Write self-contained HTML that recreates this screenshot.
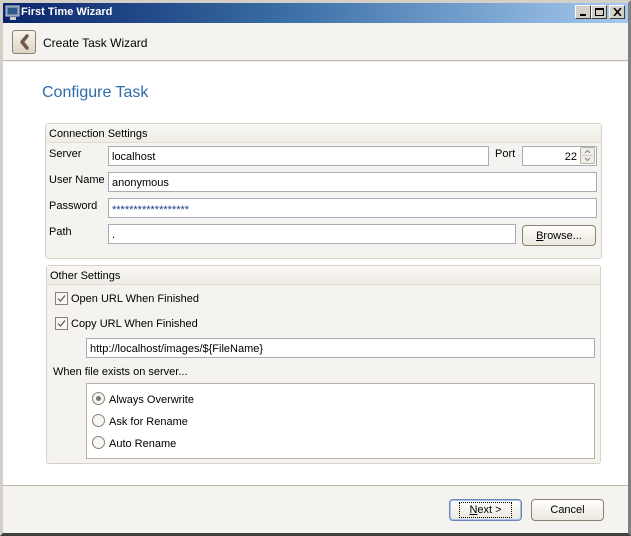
<!DOCTYPE html>
<html><head><meta charset="utf-8"><style>
*{box-sizing:border-box;margin:0;padding:0}
body{width:631px;height:536px;position:relative;overflow:hidden;background:#f5f3ef;font-family:"Liberation Sans",Arial,sans-serif;font-size:11px;color:#000}
.a{position:absolute}
.inp{position:absolute;background:#fff;border:1px solid #a5acb5;height:20px;padding:4px 3px 0;font-size:11px;line-height:13px;white-space:nowrap;overflow:hidden}
.lbl{position:absolute;font-size:11px;margin-top:1px}
.grp{position:absolute;border:1px solid #d8d2c6;border-radius:3px;background:#f5f3ef}
.gh{position:absolute;left:0;right:0;top:0;height:19px;border-bottom:1px solid #e2ddd3;background:linear-gradient(#f8f7f3,#efece5);padding:4px 3px 0;font-size:11px}
.btn{position:absolute;border:1px solid #8a8172;border-radius:4px;background:linear-gradient(#fffffd,#ece8dd);text-align:center;font-size:11px;line-height:21px}
.cb{position:absolute;width:13px;height:13px;border:1px solid #8a8172;background:#f7f6f2}
.rb{position:absolute;width:13px;height:13px;border:1px solid #8a8172;border-radius:50%;background:#f7f6f2}
</style></head><body>
<div class="a" style="left:0;top:0;width:631px;height:536px;border:3px solid #d4d0c8;border-bottom-color:#404040;border-right-color:#808080"></div>
<div class="a" style="left:3px;top:3px;width:625px;height:20px;background:linear-gradient(90deg,#0a246a 0%,#3a6ea5 45%,#a6caf0 100%)"></div>
<svg class="a" style="left:5px;top:5px" width="16" height="16"><rect x="1" y="1" width="13" height="10" fill="#6a8ab0" stroke="#ccc"/><rect x="3" y="3" width="9" height="6" fill="#2d5a8a"/><rect x="5" y="12" width="6" height="3" fill="#ccc"/></svg>
<div class="a" style="left:21px;top:6px;color:#fff;font-weight:bold;font-size:11px">First Time Wizard</div>
<div class="a" style="left:575px;top:5px;width:16px;height:14px;background:#d4d0c8;border:1px solid;border-color:#fff #404040 #404040 #fff"><div class="a" style="left:4px;top:8px;width:6px;height:2px;background:#000"></div></div>
<div class="a" style="left:591px;top:5px;width:16px;height:14px;background:#d4d0c8;border:1px solid;border-color:#fff #404040 #404040 #fff"><div class="a" style="left:3px;top:2px;width:9px;height:8px;border:1px solid #000;border-top-width:2px"></div></div>
<div class="a" style="left:609px;top:5px;width:16px;height:14px;background:#d4d0c8;border:1px solid;border-color:#fff #404040 #404040 #fff"><svg class="a" style="left:3px;top:2px" width="9" height="8"><path d="M1 0 L8 8 M8 0 L1 8" stroke="#000" stroke-width="1.6"/></svg></div>
<div class="a" style="left:3px;top:23px;width:625px;height:38px;background:#f5f3ef;border-bottom:1px solid #bfb8ad"></div>
<div class="a" style="left:12px;top:30px;width:24px;height:24px;border:1px solid #8a8172;border-radius:3px;background:linear-gradient(#f7f3ec,#ddd4c6)"></div>
<svg class="a" style="left:12px;top:30px" width="24" height="24"><path d="M15 6 L10 12 L15 18" stroke="#6b5a4a" stroke-width="3.5" fill="none" stroke-linecap="round" stroke-linejoin="round"/></svg>
<div class="a" style="left:43px;top:36px;font-size:12px">Create Task Wizard</div>
<div class="a" style="left:3px;top:62px;width:625px;height:424px;background:#fff;border-bottom:1px solid #bfb8ad"></div>
<div class="a" style="left:42px;top:84px;font-size:16px;color:#2e6ba8">Configure Task</div>

<div class="grp" style="left:45px;top:123px;width:557px;height:136px"><div class="gh">Connection Settings</div></div>
<div class="lbl" style="left:49px;top:147px">Server</div>
<div class="inp" style="left:108px;top:146px;width:381px">localhost</div>
<div class="lbl" style="left:495px;top:147px">Port</div>
<div class="inp" style="left:522px;top:146px;width:75px;text-align:right;padding-right:19px">22</div>
<div class="a" style="left:580px;top:147px;width:15px;height:17px;border:1px solid #b8b2a6;border-radius:2px;background:#f0ede6"></div>
<svg class="a" style="left:580px;top:147px" width="15" height="17"><path d="M5 6 L7.5 3.5 L10 6 M5 11 L7.5 13.5 L10 11" stroke="#888" fill="none"/><path d="M2 8.5 H13" stroke="#ccc"/></svg>
<div class="lbl" style="left:49px;top:173px">User Name</div>
<div class="inp" style="left:108px;top:172px;width:489px">anonymous</div>
<div class="lbl" style="left:49px;top:199px">Password</div>
<div class="inp" style="left:108px;top:198px;width:489px;color:#1a3a8a;font-size:11px;padding-top:5px">******************</div>
<div class="lbl" style="left:49px;top:225px">Path</div>
<div class="inp" style="left:108px;top:224px;width:408px">.</div>
<div class="btn" style="left:522px;top:225px;width:74px;height:21px;line-height:20px"><u>B</u>rowse...</div>

<div class="grp" style="left:46px;top:265px;width:555px;height:199px"><div class="gh">Other Settings</div></div>
<div class="cb" style="left:55px;top:292px"></div><svg class="a" style="left:55px;top:292px" width="13" height="13"><path d="M3 6.5 L5.5 9 L10 3.5" stroke="#555" stroke-width="1.2" fill="none"/></svg>
<div class="lbl" style="left:71px;top:292px">Open URL When Finished</div>
<div class="cb" style="left:55px;top:317px"></div><svg class="a" style="left:55px;top:317px" width="13" height="13"><path d="M3 6.5 L5.5 9 L10 3.5" stroke="#555" stroke-width="1.2" fill="none"/></svg>
<div class="lbl" style="left:71px;top:317px">Copy URL When Finished</div>
<div class="inp" style="left:86px;top:338px;width:509px">http://localhost/images/${FileName}</div>
<div class="lbl" style="left:53px;top:365px">When file exists on server...</div>
<div class="a" style="left:86px;top:383px;width:509px;height:76px;border:1px solid #b8b2a6;background:#fff"></div>
<div class="rb" style="left:92px;top:392px"><div class="a" style="left:3px;top:3px;width:5px;height:5px;border-radius:50%;background:#777"></div></div>
<div class="lbl" style="left:109px;top:393px">Always Overwrite</div>
<div class="rb" style="left:92px;top:414px"></div>
<div class="lbl" style="left:109px;top:415px">Ask for Rename</div>
<div class="rb" style="left:92px;top:436px"></div>
<div class="lbl" style="left:109px;top:437px">Auto Rename</div>

<div class="btn" style="left:449px;top:499px;width:73px;height:22px;border-color:#6b84b8;box-shadow:inset 0 0 0 1px #a8c4ec;line-height:16px"><span style="border:1px dotted #000;padding:0 9px;display:inline-block;line-height:14px;margin-top:2px"><u>N</u>ext &gt;</span></div>
<div class="btn" style="left:531px;top:499px;width:73px;height:22px;line-height:20px">Cancel</div>
</body></html>
